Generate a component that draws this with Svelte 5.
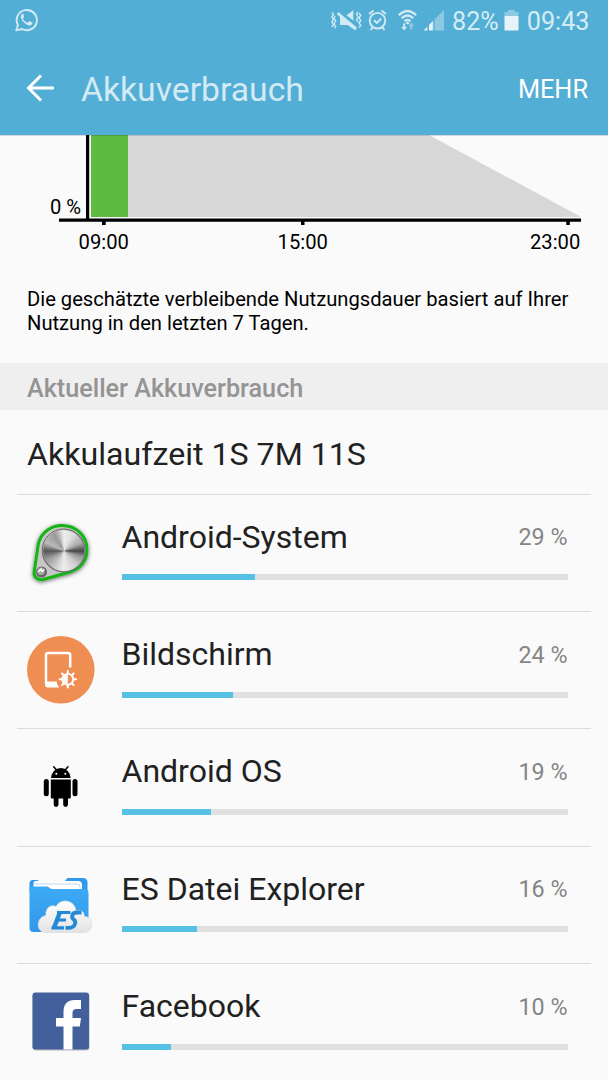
<script>
  const apps = [
    { icon: 'system', name: 'Android-System', percent: 29, level: 30 },
    { icon: 'display', name: 'Bildschirm', percent: 24, level: 25 },
    { icon: 'android', name: 'Android OS', percent: 19, level: 20 },
    { icon: 'explorer', name: 'ES Datei Explorer', percent: 16, level: 17 },
    { icon: 'facebook', name: 'Facebook', percent: 10, level: 11 }
  ]

  const teeth = [0, 45, 90, 135, 180, 225, 270, 315]
</script>

<div class="screen">
  <div class="status-bar">
    <svg class="whatsapp" width="24" height="24" viewBox="0 0 24 24">
      <path d="M1.3 22.4 2.9 16.9A10.1 10.1 0 1 1 7 21Z" fill="none" stroke="#d2eaf4" stroke-width="1.9" stroke-linejoin="round" />
      <path d="M8.6 6.3c-.4-.8-1.2-.7-1.8-.1-1.5 1.5-1.1 4.1.9 6.9 2.2 2.9 5.2 4.7 7.5 4.3 1.3-.2 2.3-1.1 2.3-2.3 0-.5-.1-.6-.6-.9l-2.2-1c-.6-.2-.8 0-1.1.4l-.8.9c-.3.3-.6.3-1 .1-1.6-.7-2.9-1.9-3.8-3.5-.2-.4 0-.6.3-.9.7-.8.9-1.1.6-1.7Z" fill="#d2eaf4" />
    </svg>
    <div class="indicators">
      <svg width="116" height="30" viewBox="0 0 116 30">
        <g fill="none" stroke="#d2eaf4" stroke-width="1.3">
          <path d="M.8 6.5 2.6 8.5.8 11 2.6 13.5.8 16 2.6 18.5.8 21" />
          <path d="M4.2 10 2.9 12.2 4.8 15 2.9 17.8 4.8 20.5 3.5 22.5" />
          <path d="M28 7 29.8 9.5 28 12 29.8 14.5 28 17 29.8 19.5 28 21.5" />
          <path d="M26.8 6 25.5 8.2 27.3 11 25.5 13.8 27 16" />
        </g>
        <path d="M15.5 9.3 22.3 4.3V14.5ZM5.8 8 7.3 6 25.8 21.5 24.5 24.5 16.5 19H9V11Z" fill="#d2eaf4" />
        <g fill="none" stroke="#d2eaf4" stroke-width="1.9">
          <circle cx="46.5" cy="14.7" r="7.8" />
          <path d="M43 14.2 45.8 16.9 50.2 12.5M38 8 42.5 4.5M55 8 50.5 4.5M41.5 21.5 39.5 24M51.5 21.5 53.5 24" />
        </g>
        <path d="M67.8 9.2Q76.5.8 85.2 9.2M70.7 12.2Q76.5 6.8 82.3 12.2M73.4 15.2Q76.5 12.5 79.6 15.2" fill="none" stroke="#d2eaf4" stroke-width="2.2" />
        <path d="m74.3 17 2.2-1.4 2.2 1.4-2.2 1.6Z" fill="#d2eaf4" />
        <path d="M72.2 17.5h2v3.5h1.7L73.2 24.5 70.3 21h1.9Z" fill="#d2eaf4" />
        <path d="M78.9 23.5v-3.5h-1.7l3-3.5 3 3.5h-1.9v3.5Z" fill="#8cc9e3" />
        <path d="M103.7 24.5V13.3L113 4V24.5Z" fill="#8cc9e3" />
        <path d="M101.9 14.9 103.7 13.3V24.5H101.9Z" fill="#70bbdb" />
        <path d="M92.5 24.500 96.300 20.700V24.500ZM98 24.500V19L101.900 14.900V24.500Z" fill="#e6f4f9" />
      </svg>
      <span class="charge">82%</span>
      <svg class="battery" width="15" height="21" viewBox="0 0 15 21">
        <path d="M4 0h7v2h3.5v4H.5V2H4Z" fill="#8cc9e3" />
        <path d="M.5 6h14v14.5H.5Z" fill="#e6f4f9" />
      </svg>
      <span class="clock">09:43</span>
    </div>
  </div>

  <header>
    <svg width="28" height="28" viewBox="0 0 28 28">
      <path d="M28 14H3M15 1.5 2.5 14 15 26.5" fill="none" stroke="#fff" stroke-width="3" />
    </svg>
    <h1>Akkuverbrauch</h1>
    <span class="more">MEHR</span>
  </header>

  <svg class="chart" width="608" height="125" viewBox="0 135 608 125">
    <path d="M128 135H429L581 217H128Z" fill="#d7d7d7" />
    <rect x="91" y="135" width="37" height="82" fill="#5dbb3f" />
    <path d="M0 135.5H608" stroke="#000" stroke-opacity=".13" />
    <path d="M86 135h3.2v83.500H86ZM59 218.500h522v3.300H59ZM102 221.500h3.700v3.500H102ZM301 221.500h3.500v3.500H301ZM566.300 221.500h3.500v3.500h-3.500Z" />
    <text x="50" y="213.5">0 %</text>
    <text x="103.7" y="249" text-anchor="middle">09:00</text>
    <text x="302.7" y="249" text-anchor="middle">15:00</text>
    <text x="580.3" y="249" text-anchor="end">23:00</text>
  </svg>

  <p class="estimate">Die geschätzte verbleibende Nutzungsdauer basiert auf Ihrer<br />Nutzung in den letzten 7 Tagen.</p>

  <h2>Aktueller Akkuverbrauch</h2>
  <div class="runtime">Akkulaufzeit 1S 7M 11S</div>

  <ul>
    {#each apps as app}
      <li>
        <svg class="icon {app.icon}" width="90" height="90" viewBox="0 0 90 90">
          {#if app.icon === 'system'}
            <defs>
              <linearGradient id="rim" x1="0" y1="0" x2="1" y2="1">
                <stop offset="0" stop-color="#eee" />
                <stop offset=".5" stop-color="#777" />
                <stop offset="1" stop-color="#bbb" />
              </linearGradient>
              <filter id="shade" x="-20%" y="-20%" width="140%" height="140%">
                <feDropShadow dx="0" dy="1" stdDeviation="2" flood-color="#000" flood-opacity=".6" />
              </filter>
              <clipPath id="disc"><circle cx="47.7" cy="40.5" r="20.5" /></clipPath>
            </defs>
            <path d="M22.5 33C26 21.5 35.5 15.5 46 15.5 60 15.5 71 26 71 39.5 71 51 64 59 54 62L27 69.500C21.500 70.500 17 66.500 18.300 61Z" fill="#c6c6c6" stroke="#12b512" stroke-width="3" filter="url(#shade)" />
            <circle cx="47.7" cy="40.5" r="21.5" fill="url(#rim)" stroke="#666" stroke-width="1" />
            <foreignObject x="27" y="20" width="41.5" height="41.5" clip-path="url(#disc)">
              <div class="metal"></div>
            </foreignObject>
            <circle cx="25.5" cy="62" r="5.5" fill="#666" />
            <circle cx="25" cy="61.2" r="3.7" fill="#aaa" />
            <path d="m22 62 3-3 1 2.5 2.5-2" fill="none" stroke="#fff" stroke-width="1.3" />
          {:else if app.icon === 'display'}
            <circle cx="44.8" cy="44.8" r="33.8" fill="#ef8e52" />
            <path d="M54.2 42.5V30a2 2 0 0 0-2-2H32a2 2 0 0 0-2 2v28" fill="none" stroke="#fff" stroke-width="2.5" />
            <path d="M29 56.5H40.5Q40.8 60 43.5 62.5H32Q29 62.5 29 59.5Z" fill="#fff" />
            <g transform="translate(51.8 54.3)">
              {#each teeth as angle}
                <path d="M0-6v-2.2" stroke="#fff" stroke-width="2" stroke-linecap="round" transform="rotate({angle})" />
              {/each}
              <circle r="5.4" fill="#ef8e52" stroke="#fff" stroke-width="1.9" />
              <path d="M0-4.5A4.5 4.5 0 0 0 0 4.500Z" fill="#fff" />
            </g>
          {:else if app.icon === 'android'}
            <path d="M35 34a9.8 10 0 0 1 19.6 0Z" />
            <path d="m40.5 26-2.8-3.2M49.2 26l2.8-3.2" stroke="#000" stroke-width="1.5" stroke-linecap="round" />
            <circle cx="40.3" cy="29.7" r="1" fill="#fff" />
            <circle cx="49.3" cy="29.7" r="1" fill="#fff" />
            <path d="M34.8 35.5h20v18q0 1-1 1H52v6a2.4 2.4 0 0 1-4.8 0v-6h-4.700v6a2.400 2.400 0 0 1-4.800 0v-6h-1.900q-1 0-1-1Z" />
            <rect x="27.8" y="35" width="5" height="17.2" rx="2.5" />
            <rect x="56.5" y="35" width="5" height="17.2" rx="2.5" />
          {:else if app.icon === 'explorer'}
            <defs>
              <linearGradient id="cloud" x1="0" y1="0" x2="0" y2="1">
                <stop offset="0" stop-color="#fff" />
                <stop offset="1" stop-color="#e3e3e3" />
              </linearGradient>
              <linearGradient id="folder" x1="0" y1="0" x2="0" y2="1">
                <stop offset="0" stop-color="#3dabf5" />
                <stop offset="1" stop-color="#3297ea" />
              </linearGradient>
            </defs>
            <path d="M48 21 51.5 17H67q4.5 0 4.5 4.5V60H48ZM13.5 30V22.500Q13.500 19 17 19H22V30Z" fill="#3199eb" />
            <path d="M17.5 28V22q0-2 2-2H62q4 0 4 4v7H17.500Z" fill="#fff" />
            <path d="M18.5 23H61.500q2.500 0 2.500 3v5" fill="none" stroke="#b9d3e8" stroke-width=".9" />
            <path d="M13.5 25.500H31.500L35.500 28H68.500q4 0 4 4V67q0 4-4 4H17.500q-4 0-4-4Z" fill="url(#folder)" />
            <path d="M29.5 71.5C19.5 71 20 56 30 54.500 29 47 35 43 40 45.500 45 36.500 59 39 60 50 66 48 69 52 68 55.500 79 55 78 71 68.500 71.500Z" fill="url(#cloud)" stroke="#d7dde2" stroke-width=".7" />
            <path d="M41 51.500H54.500M39 59h11M35.500 66.800h12.500" stroke="#2189d5" stroke-width="3.2" />
            <path d="M44 51 38 67" stroke="#2189d5" stroke-width="4.3" />
            <path d="M65.500 51.500H61Q57 51.500 56.200 54.500 55.700 57 58 58.800 60 60.500 59 63 57.800 66.800 53 66.800H49.500" fill="none" stroke="#2189d5" stroke-width="3.8" />
          {:else}
            <rect x="16.5" y="14" width="57" height="57.5" rx="3" fill="#bcbcbc" />
            <rect x="16.5" y="13.5" width="56.5" height="57" rx="3" fill="#43609c" />
            <path d="M47.500 70.500V47.500H40V39h7.500v-6C47.500 25 51.500 21 58.500 21H65v9h-4.500q-4 0-4 4v5H65l-1.200 8.500H56.500V70.500Z" fill="#fff" />
          {/if}
        </svg>
        <div class="usage">
          <div class="line">
            <span class="name">{app.name}</span>
            <span class="percent">{app.percent} %</span>
          </div>
          <div class="track">
            <div class="fill" style="width: {app.level}%"></div>
          </div>
        </div>
      </li>
    {/each}
  </ul>
</div>

<style>
  :global(body) {
    background: #fafafa;
  }

  .screen {
    width: 608px;
    height: 1080px;
    overflow: hidden;
    background: #fafafa;
    color: #212121;
    font-family: Roboto, sans-serif;
    white-space: nowrap;
  }

  .status-bar {
    display: flex;
    justify-content: space-between;
    box-sizing: border-box;
    height: 42px;
    padding: 0 18.5px 0 15px;
    background: #52aed4;
    color: #d6ecf5;
    font-size: 25.2px;
    line-height: 43px;
  }

  .whatsapp {
    margin-top: 8px;
  }

  .indicators {
    display: flex;
  }

  .indicators svg {
    margin-top: 6px;
  }

  .charge {
    margin-left: 5px;
  }

  .indicators .battery {
    margin: 10px 8px 0 5px;
  }

  header {
    display: flex;
    align-items: center;
    box-sizing: border-box;
    height: 93px;
    padding: 0 20px 0 26px;
    background: #52aed4;
  }

  header svg {
    margin-bottom: 2px;
  }

  h1 {
    flex: 1;
    margin: 2px 0 0 27px;
    color: #d2eaf4;
    font-size: 33.7px;
    font-weight: 400;
  }

  .more {
    margin-top: 1px;
    color: #fff;
    font-size: 25.3px;
  }

  .chart {
    display: block;
    font-size: 20.2px;
  }

  .estimate {
    margin: 27px 0 28px 27px;
    color: #000;
    font-size: 20.18px;
    line-height: 24px;
  }

  h2 {
    box-sizing: border-box;
    height: 47px;
    margin: 0;
    padding: 1px 0 0 27px;
    background: #efefef;
    color: #949494;
    font-size: 25.2px;
    font-weight: 500;
    line-height: 49px;
  }

  .runtime {
    height: 83.6px;
    padding-left: 27px;
    font-size: 32.15px;
    line-height: 88px;
  }

  ul {
    margin: 0 17px;
    padding: 0;
    list-style: none;
  }

  li {
    display: flex;
    box-sizing: border-box;
    height: 117.35px;
    border-top: 1px solid #dcdcdc;
  }

  .icon {
    flex: none;
    margin: 15px 0 0 -1px;
  }

  .icon.display {
    margin-top: 13px;
  }

  .icon.explorer {
    margin-top: 14px;
  }

  .metal {
    height: 100%;
    background: conic-gradient(#eee, #ddd 8%, #aaa 18%, #444 25%, #999 30%, #ccc 38%, #eee 50%, #ccc 58%, #999 68%, #555 75%, #bbb 82%, #999 92%, #eee);
  }

  .usage {
    width: 446px;
    margin-left: 15.5px;
    padding-top: 22.2px;
  }

  .line {
    display: flex;
    justify-content: space-between;
    height: 57.5px;
    font-size: 32px;
    line-height: 40px;
  }

  .percent {
    padding-top: .4px;
    color: #858585;
    font-size: 23.3px;
  }

  .track {
    height: 6px;
    background: #e0e0de;
  }

  .fill {
    height: 100%;
    background: #56c0e5;
  }
</style>
